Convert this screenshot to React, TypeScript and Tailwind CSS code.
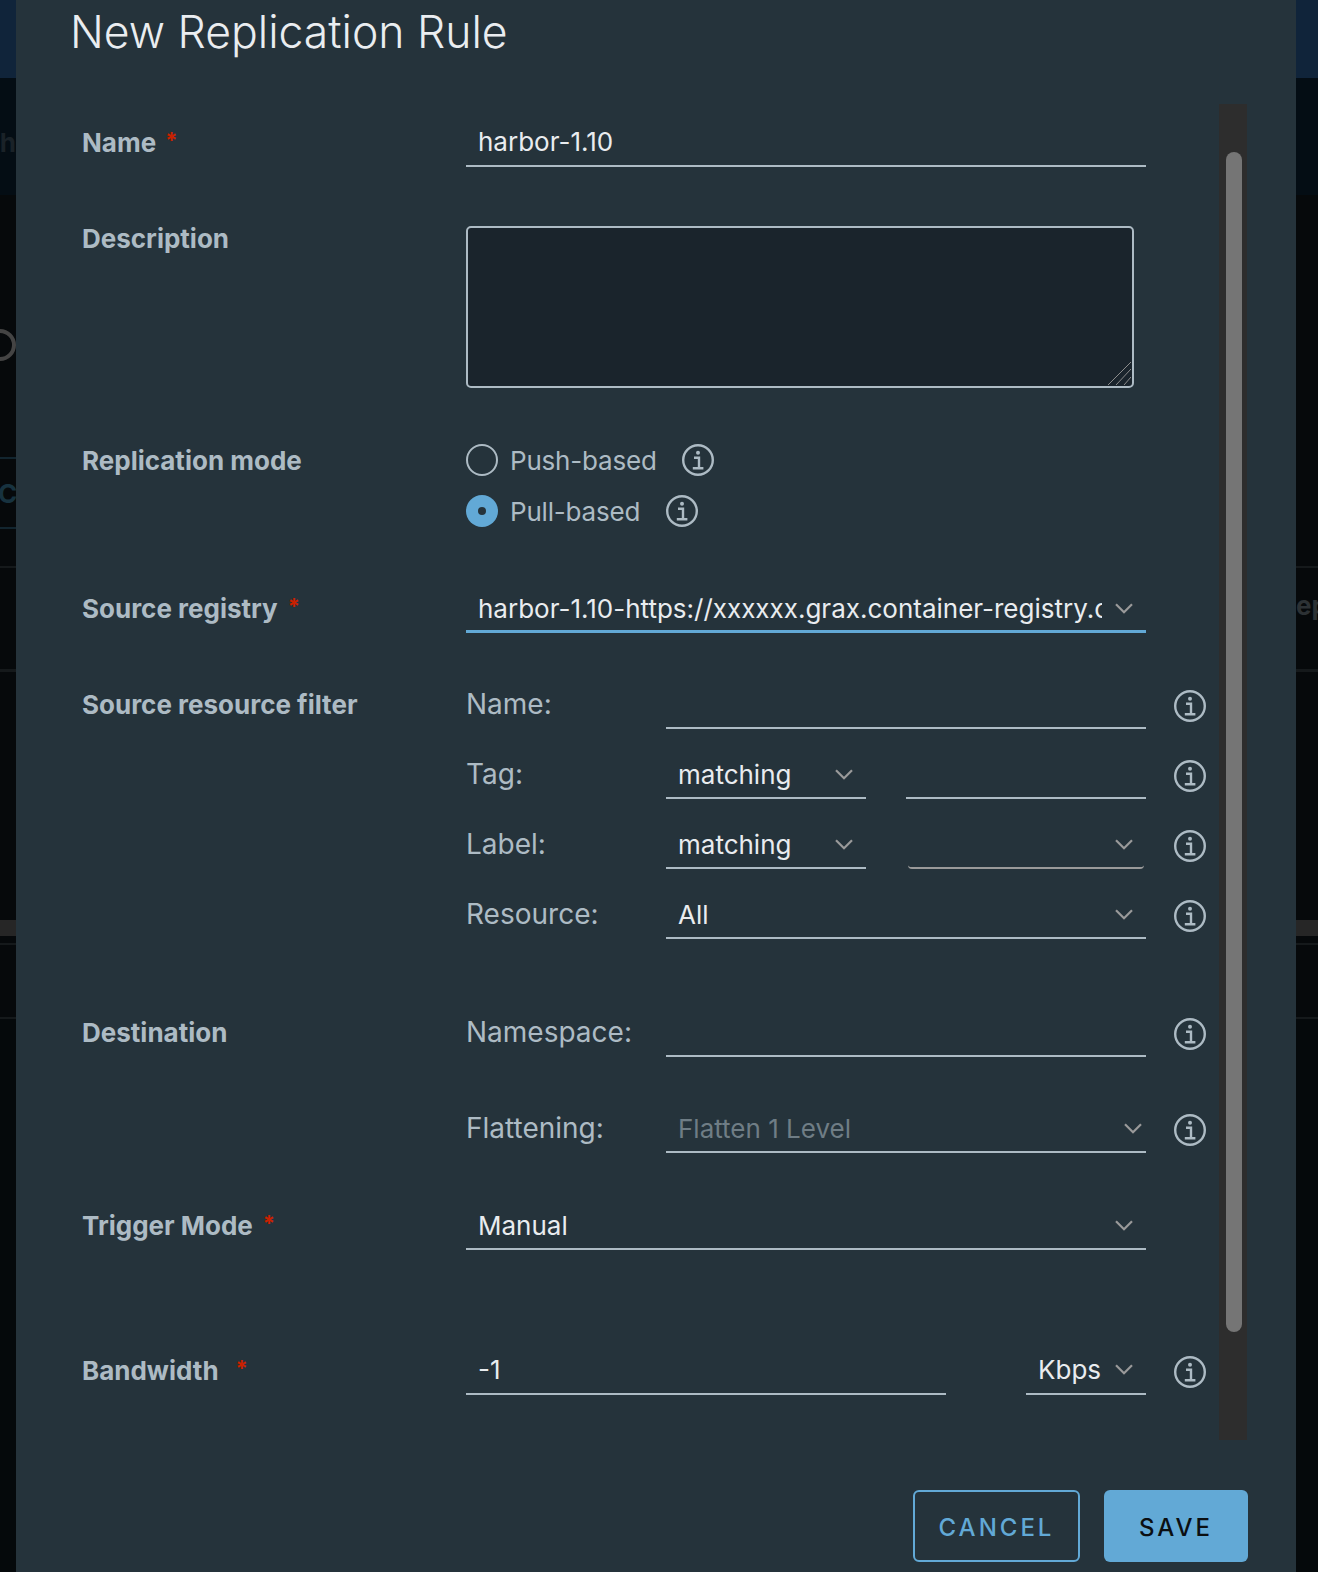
import React from "react";

const InfoIcon = () => (
  <svg viewBox="0 0 32 32" className="w-[32px] h-[32px] shrink-0" fill="none">
    <circle cx="16" cy="16" r="14.8" stroke="#adbbc4" strokeWidth="2.4" />
    <circle cx="16" cy="8.8" r="2" fill="#adbbc4" />
    <path d="M12 13.8h5v10.4M10.8 24.2h10.6" stroke="#adbbc4" strokeWidth="2.4" />
  </svg>
);

const Chevron = ({ className = "mr-[13px]" }: { className?: string }) => (
  <svg viewBox="0 0 18 11" className={`w-[18px] h-[11px] shrink-0 ${className}`} fill="none">
    <path d="M1 1.2l8 8 8-8" stroke="#9a9a9a" strokeWidth="2.2" />
  </svg>
);

const Line = ({ className = "", children }: { className?: string; children?: React.ReactNode }) => (
  <div className={`h-[46px] flex items-center justify-between pl-[12px] pb-[1px] border-b-2 border-[#adbbc4] text-[26px] text-[#e9ecef] ${className}`}>
    {children}
  </div>
);

const Label = ({ text, star, className = "" }: { text: string; star?: string; className?: string }) => (
  <div className={`w-[384px] shrink-0 h-[42px] flex items-center text-[26px] font-bold text-[#adbbc4] ${className}`}>
    {text}
    {star ? <span className={`text-[#c92100] text-[22px] font-bold ${star}`}>*</span> : null}
  </div>
);

const SubLabel = ({ text }: { text: string }) => (
  <div className="w-[200px] shrink-0 h-[42px] flex items-center text-[28px] text-[#adbbc4]">{text}</div>
);

const RowInfo = () => (
  <span className="ml-[28px] mt-[7px]">
    <InfoIcon />
  </span>
);

const Strip = ({ side }: { side: "left" | "right" }) => {
  const left = side === "left";
  return (
    <div className={`shrink-0 h-full overflow-hidden bg-[#06090b] flex flex-col ${left ? "w-[16px]" : "w-[22px]"}`}>
      <div className="h-[78px] shrink-0 bg-[#10243a]" />
      <div className={`h-[117px] shrink-0 pt-[12px] bg-[#040d14] flex items-center overflow-hidden text-[26px] font-bold text-[#1a2228] ${left ? "justify-end" : ""}`}>
        {left ? <span className="whitespace-nowrap">th</span> : null}
      </div>
      <div className="h-[262px] shrink-0 flex items-end overflow-hidden pb-[96px]">
        {left ? <div className="w-[40px] h-[32px] shrink-0 -ml-[24px] rounded-full border-4 border-[#444444]" /> : null}
      </div>
      <div className="h-[109px] shrink-0 flex flex-col overflow-hidden">
        {left ? (
          <div className="h-[72px] border-y-2 border-[#12252f] flex items-center text-[26px] font-bold text-[#17323f] whitespace-nowrap">
            <span className="-ml-[2px]">CA</span>
          </div>
        ) : null}
      </div>
      <div className="h-[2px] shrink-0 bg-[#15191b]" />
      <div className="h-[101px] shrink-0 pt-[22px] overflow-hidden text-[26px] leading-[32px] font-bold text-[#2c3134] whitespace-nowrap">
        {left ? null : <span>ep</span>}
      </div>
      <div className="h-[3px] shrink-0 bg-[#15191b]" />
      <div className="h-[248px] shrink-0" />
      <div className="h-[16px] shrink-0 bg-[#262626]" />
      <div className="h-[7px] shrink-0" />
      <div className="h-[2px] shrink-0 bg-[#15191b]" />
      <div className="h-[72px] shrink-0" />
      <div className="h-[2px] shrink-0 bg-[#15191b]" />
      <div className="flex-1 bg-[#05090b]" />
    </div>
  );
};

export default function App() {
  return (
    <div className="w-[1318px] h-[1572px] flex overflow-hidden font-['Inter','Liberation_Sans',sans-serif]">
      <Strip side="left" />
      <div className="flex-1 h-full bg-[#25333b] flex flex-col pr-[48px]">
        <div className="h-[104px] shrink-0 pl-[54px] text-[44.5px] leading-[64px] font-light text-[#eaedf0]">New Replication Rule</div>

        <div className="h-[1336px] shrink-0 flex justify-between pl-[66px]">
          <div className="pt-[17px]">
            <div className="flex">
              <Label text="Name" star="ml-[9px] -mt-[4px]" />
              <Line className="w-[680px] !pb-[3px]">harbor-1.10</Line>
            </div>

            <div className="flex mt-[59px]">
              <Label text="Description" className="-mt-[9px]" />
              <div className="relative w-[668px] h-[162px] bg-[#1a242c] border-2 border-[#adbbc4] rounded-[5px]">
                <svg viewBox="0 0 24 24" className="absolute right-[1px] bottom-[1px] w-[24px] h-[24px]" fill="none">
                  <path d="M1 24L24 1M9 24L24 8M17 24L24 16" stroke="#8c8c8c" strokeWidth="1" />
                </svg>
              </div>
            </div>

            <div className="flex mt-[55px]">
              <Label text="Replication mode" className="-mt-[4px]" />
              <div className="flex flex-col gap-[17px]">
                <div className="h-[34px] flex items-center text-[26px] text-[#adbbc4]">
                  <span className="w-[32px] h-[32px] rounded-full border-2 border-[#adbbc4]" />
                  <span className="ml-[12px] tracking-[-0.2px]">Push-based</span>
                  <span className="ml-[25px]"><InfoIcon /></span>
                </div>
                <div className="h-[34px] flex items-center text-[26px] text-[#adbbc4]">
                  <span className="w-[32px] h-[32px] rounded-full bg-[#62a9d6] flex items-center justify-center">
                    <span className="w-[8px] h-[8px] rounded-full bg-[#25333b]" />
                  </span>
                  <span className="ml-[12px] tracking-[-0.2px]">Pull-based</span>
                  <span className="ml-[26px]"><InfoIcon /></span>
                </div>
              </div>
            </div>

            <div className="flex mt-[59px]">
              <Label text="Source registry" star="ml-[10px] -mt-[4px]" />
              <Line className="w-[680px] border-b-[3px] !border-[#62a9d6]">
                <span className="w-[624px] overflow-hidden whitespace-nowrap">harbor-1.10-https://xxxxxx.grax.container-registry.com</span>
                <Chevron />
              </Line>
            </div>

            <div className="flex mt-[50px]">
              <Label text="Source resource filter" />
              <div className="flex flex-col gap-[24px]">
                <div className="flex items-start">
                  <SubLabel text="Name:" />
                  <Line className="w-[480px]" />
                  <RowInfo />
                </div>
                <div className="flex items-start">
                  <SubLabel text="Tag:" />
                  <Line className="w-[200px]">matching<Chevron /></Line>
                  <Line className="w-[240px] ml-[40px]" />
                  <RowInfo />
                </div>
                <div className="flex items-start">
                  <SubLabel text="Label:" />
                  <Line className="w-[200px]">matching<Chevron /></Line>
                  <Line className="w-[236px] ml-[42px] mr-[2px] rounded-br-[4px] rounded-bl-[4px] !border-[#9a9a9a]"><span /><Chevron className="mr-[11px]" /></Line>
                  <RowInfo />
                </div>
                <div className="flex items-start">
                  <SubLabel text="Resource:" />
                  <Line className="w-[480px]">All<Chevron /></Line>
                  <RowInfo />
                </div>
              </div>
            </div>

            <div className="flex mt-[72px]">
              <Label text="Destination" />
              <div className="flex flex-col gap-[50px]">
                <div className="flex items-start">
                  <SubLabel text="Namespace:" />
                  <Line className="w-[480px]" />
                  <RowInfo />
                </div>
                <div className="flex items-start">
                  <SubLabel text="Flattening:" />
                  <Line className="w-[480px] !text-[#6f7d85]">Flatten 1 Level<Chevron className="mr-[4px]" /></Line>
                  <RowInfo />
                </div>
              </div>
            </div>

            <div className="flex mt-[51px]">
              <Label text="Trigger Mode" star="ml-[10px] -mt-[4px]" />
              <Line className="w-[680px]">Manual<Chevron /></Line>
            </div>

            <div className="flex mt-[99px]">
              <Label text="Bandwidth" star="ml-[17px] -mt-[4px]" />
              <Line className="w-[480px] !pb-[3px]">-1</Line>
              <Line className="w-[120px] ml-[80px] !pb-[3px]">Kbps<Chevron /></Line>
              <RowInfo />
            </div>
          </div>

          <div className="w-[28px] h-full mr-[1px] bg-[#2d2d2d] pt-[48px] pl-[7px]">
            <div className="w-[16px] h-[1180px] rounded-[8px] bg-[#757575]" />
          </div>
        </div>

        <div className="flex justify-end gap-[24px] mt-[50px]">
          <button className="w-[167px] h-[72px] pt-[4px] rounded-[6px] border-2 border-[#62a9d6] text-[#62a9d6] text-[24px] font-medium tracking-[3px]">CANCEL</button>
          <button className="w-[144px] h-[72px] pt-[4px] rounded-[6px] bg-[#62a9d6] text-[#0b0f12] text-[24px] font-medium tracking-[3px]">SAVE</button>
        </div>
      </div>
      <Strip side="right" />
    </div>
  );
}
